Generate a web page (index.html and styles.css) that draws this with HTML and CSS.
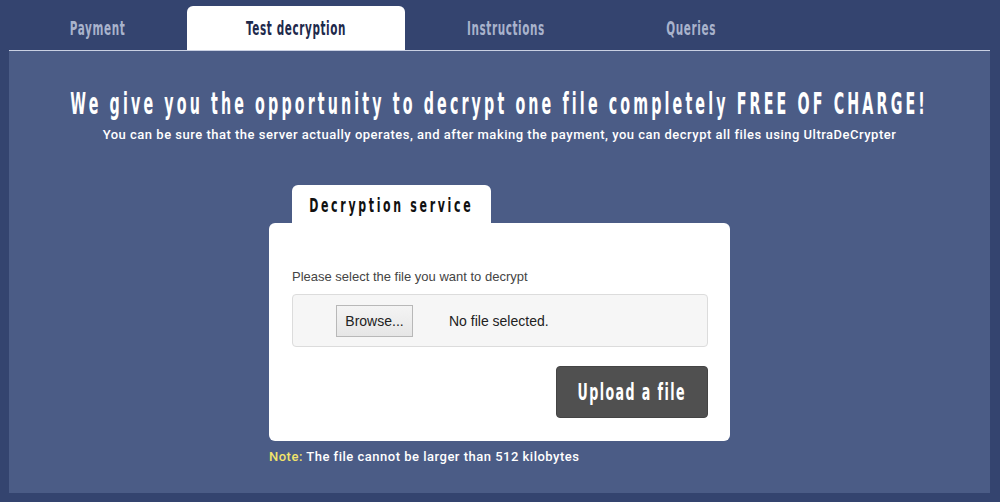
FILE: index.html
```html
<!DOCTYPE html>
<html>

<head>
    <meta charset="utf-8" />
    <title>Test decryption</title>
    <link rel="stylesheet" href="styles.css">
</head>

<body>
    <div class="page">
        <nav class="tabs">
            <a class="tab tab-pay"><span class="narrow">Payment</span></a>
            <a class="tab tab-test active"><span class="narrow">Test decryption</span></a>
            <a class="tab tab-info"><span class="narrow">Instructions</span></a>
            <a class="tab tab-ask"><span class="narrow">Queries</span></a>
        </nav>
        <div class="panel">
            <h1><span class="narrow">We give you the opportunity to decrypt one file completely FREE OF CHARGE!</span></h1>
            <p class="lead">You can be sure that the server actually operates, and after making the payment, you can decrypt all files using UltraDeCrypter</p>
            <div class="service">
                <div class="service-tab"><span class="narrow">Decryption service</span></div>
                <div class="service-body">
                    <div class="label">Please select the file you want to decrypt</div>
                    <div class="file-box">
                        <button class="browse">Browse...</button>
                        <span class="file-name">No file selected.</span>
                    </div>
                    <div class="actions">
                        <button class="upload"><span class="narrow">Upload a file</span></button>
                    </div>
                </div>
                <p class="note"><span class="note-key">Note:</span> The file cannot be larger than 512 kilobytes</p>
            </div>
        </div>
    </div>
</body>

</html>
```

FILE: styles.css
```css
html, body {
    margin: 0;
    height: 100%;
}

body {
    background-color: #34446f;
    overflow: hidden;
}

/* condensed display face: squeeze DejaVu Sans Bold */
.narrow {
    display: inline-block;
    white-space: nowrap;
    font-family: "DejaVu Sans", sans-serif;
    font-weight: bold;
    transform: scaleX(0.55);
}

.page {
    padding: 0 10px 9px 9px;
}

.tabs {
    display: flex;
    height: 50px;
    align-items: flex-end;
}

.tab {
    display: flex;
    justify-content: center;
    height: 44px;
    line-height: 44px;
    font-size: 19px;
    letter-spacing: 1.1px;
    color: #a9b3cc;
}

.tab-pay { width: 178px; }
.tab-test { width: 218px; }
.tab-info { width: 201px; }
.tab-ask { width: 171px; }

.tab.active {
    background-color: #fff;
    color: #1e2a4c;
    border-radius: 6px 6px 0 0;
}

.panel {
    background-color: #4b5c86;
    border-top: 1px solid #c9d0e2;
    padding: 34px 0 29px;
    height: 443px;
    box-sizing: border-box;
}

h1 {
    margin: 0;
    display: flex;
    justify-content: center;
    font-weight: normal;
    font-size: 31px;
    line-height: 36px;
    letter-spacing: 6.8px;
    color: #fff;
}

h1 .narrow {
    transform: scaleX(0.46);
}

.lead {
    margin: 5px 0 0;
    text-align: center;
    font-family: Roboto, "Liberation Sans", sans-serif;
    font-weight: 500;
    font-size: 13px;
    line-height: 18px;
    letter-spacing: 0.5px;
    color: #fff;
}

.service {
    width: 461px;
    margin: 41px auto 0;
}

.service-tab {
    margin-left: 23px;
    width: 199px;
    height: 38px;
    line-height: 40px;
    display: flex;
    justify-content: center;
    background-color: #fff;
    border-radius: 6px 6px 0 0;
    font-size: 20px;
    letter-spacing: 4.85px;
    color: #111;
}

.service-body {
    background-color: #fff;
    border-radius: 6px;
    padding: 46px 22px 23px 23px;
}

.label {
    font-family: "Liberation Sans", Arial, sans-serif;
    font-size: 13px;
    line-height: 16px;
    color: #444;
    margin-bottom: 9px;
}

.file-box {
    display: flex;
    align-items: center;
    height: 51px;
    background-color: #f6f6f6;
    border: 1px solid #dcdcdc;
    border-radius: 4px;
    padding-left: 43px;
}

.browse {
    width: 77px;
    height: 32px;
    padding: 0;
    background: linear-gradient(#f4f4f4, #e6e6e6);
    border: 1px solid #b8b8b8;
    font-family: "Liberation Sans", Arial, sans-serif;
    font-size: 14px;
    color: #222;
}

.file-name {
    margin-left: 36px;
    font-family: "Liberation Sans", Arial, sans-serif;
    font-size: 14px;
    color: #222;
}

.actions {
    display: flex;
    justify-content: flex-end;
    margin-top: 19px;
}

.upload {
    display: flex;
    justify-content: center;
    align-items: center;
    width: 152px;
    height: 52px;
    padding: 0;
    background-color: #505050;
    border: 1px solid #444;
    border-radius: 4px;
    font-size: 23px;
    letter-spacing: 2.6px;
    color: #fff;
}

.note {
    margin: 8px 0 0;
    font-family: Roboto, "Liberation Sans", sans-serif;
    font-weight: 500;
    font-size: 13px;
    line-height: 16px;
    letter-spacing: 0.5px;
    color: #fff;
}

.note-key {
    color: #f2e36a;
}
```
